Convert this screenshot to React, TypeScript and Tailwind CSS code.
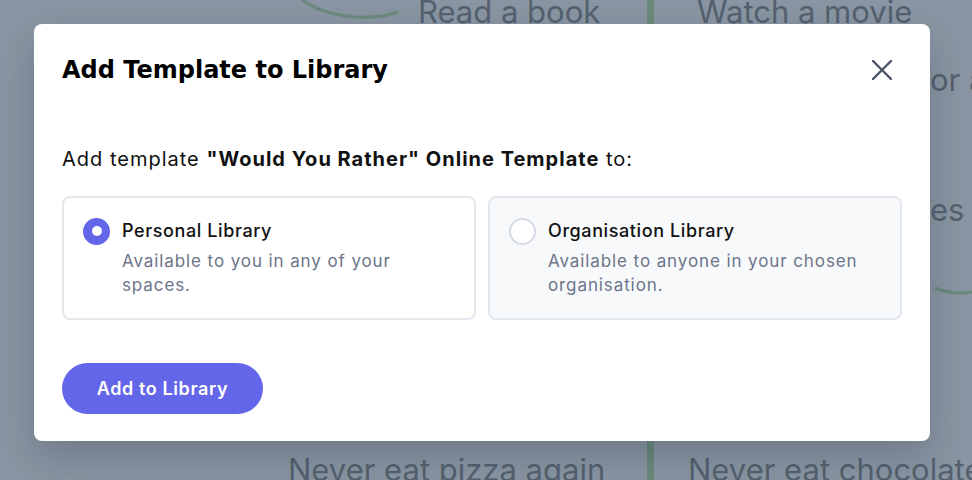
import React from "react";

const ui = { fontFamily: '"Inter", "Noto Sans", sans-serif' };
const titleFont = { fontFamily: '"DejaVu Sans", "Inter", sans-serif' };
const bgFont = { fontFamily: '"Inter", "Roboto", sans-serif' };

function Radio({ checked }: { checked: boolean }) {
  return checked ? (
    <div className="w-[27px] h-[27px] rounded-full bg-[#6466e9] flex items-center justify-center shrink-0">
      <div className="w-[10px] h-[10px] rounded-full bg-white" />
    </div>
  ) : (
    <div className="w-[27px] h-[27px] rounded-full border-2 border-[#d5dae3] bg-white shrink-0" />
  );
}

function Option({
  checked,
  title,
  desc,
  muted,
}: {
  checked: boolean;
  title: string;
  desc: string;
  muted?: boolean;
}) {
  return (
    <div
      className={`flex-1 rounded-[8px] border-2 border-[#e3e7ee] pl-[19px] pr-5 pt-[19px] pb-[21px] flex gap-3 ${
        muted ? "bg-[#f8f9fb]" : "bg-white"
      }`}
    >
      <div className="h-[28px] flex items-center">
        <Radio checked={checked} />
      </div>
      <div className="flex flex-col">
        <div className="text-[18px] leading-[28px] font-medium text-[#111] tracking-[0.6px]">{title}</div>
        <div className="mt-1 text-[17px] leading-[24px] text-[#6b7489] tracking-[0.9px] max-w-[330px]">{desc}</div>
      </div>
    </div>
  );
}

export default function App() {
  return (
    <div className="relative w-[972px] h-[480px] overflow-hidden bg-[#8a96a3]" style={ui}>
      {/* background page under overlay */}
      <div className="absolute inset-0 text-[#56616f]" style={bgFont}>
        <svg className="absolute left-0 top-0" width="972" height="480">
          <path d="M296 -6 C 318 18, 370 22, 398 12" stroke="#6c8a7c" strokeWidth="3" fill="none" />
          <path d="M935 288 C 948 293, 962 294, 972 292" stroke="#6c8a7c" strokeWidth="3" fill="none" />
          <rect x="647" y="0" width="7" height="480" fill="#6a8a7b" />
        </svg>
        <div className="absolute left-[418px] top-[-8px] text-[31px] leading-[40px]">Read a book</div>
        <div className="absolute left-[697px] top-[-8px] text-[31px] leading-[40px]">Watch a movie</div>
        <div className="absolute left-[930px] top-[60px] text-[31px] leading-[40px] whitespace-nowrap">or a</div>
        <div className="absolute left-[930px] top-[190px] text-[31px] leading-[40px] whitespace-nowrap">es</div>
        <div className="absolute left-[288px] top-[450px] text-[31px] leading-[40px] whitespace-nowrap">Never eat pizza again</div>
        <div className="absolute left-[688px] top-[450px] text-[31px] leading-[40px] whitespace-nowrap">Never eat chocolate</div>
      </div>

      {/* modal */}
      <div className="absolute left-[34px] top-[24px] w-[896px] h-[417px] bg-white rounded-[8px] shadow-[0_16px_40px_rgba(40,50,65,0.28)] px-[28px] pt-[30px]">
        <div className="flex items-start justify-between">
          <h2 className="text-[24px] leading-[32px] font-bold text-black" style={titleFont}>
            Add Template to Library
          </h2>
          <button className="mt-[6px] mr-[10px] text-[#4a5366]">
            <svg width="20" height="20" viewBox="0 0 20 20">
              <path d="M1 1 L19 19 M19 1 L1 19" stroke="currentColor" strokeWidth="2.4" strokeLinecap="round" />
            </svg>
          </button>
        </div>
        <p className="mt-[59px] text-[20px] leading-[28px] text-[#111] tracking-[1px]">
          Add template <span className="font-bold">"Would You Rather" Online Template</span> to:
        </p>
        <div className="mt-[23px] flex gap-3">
          <Option checked title="Personal Library" desc="Available to you in any of your spaces." />
          <Option
            checked={false}
            muted
            title="Organisation Library"
            desc="Available to anyone in your chosen organisation."
          />
        </div>
        <button className="mt-[43px] w-[201px] h-[51px] rounded-full bg-[#6466e9] text-white text-[18px] font-semibold tracking-[0.6px]">
          Add to Library
        </button>
      </div>
    </div>
  );
}
